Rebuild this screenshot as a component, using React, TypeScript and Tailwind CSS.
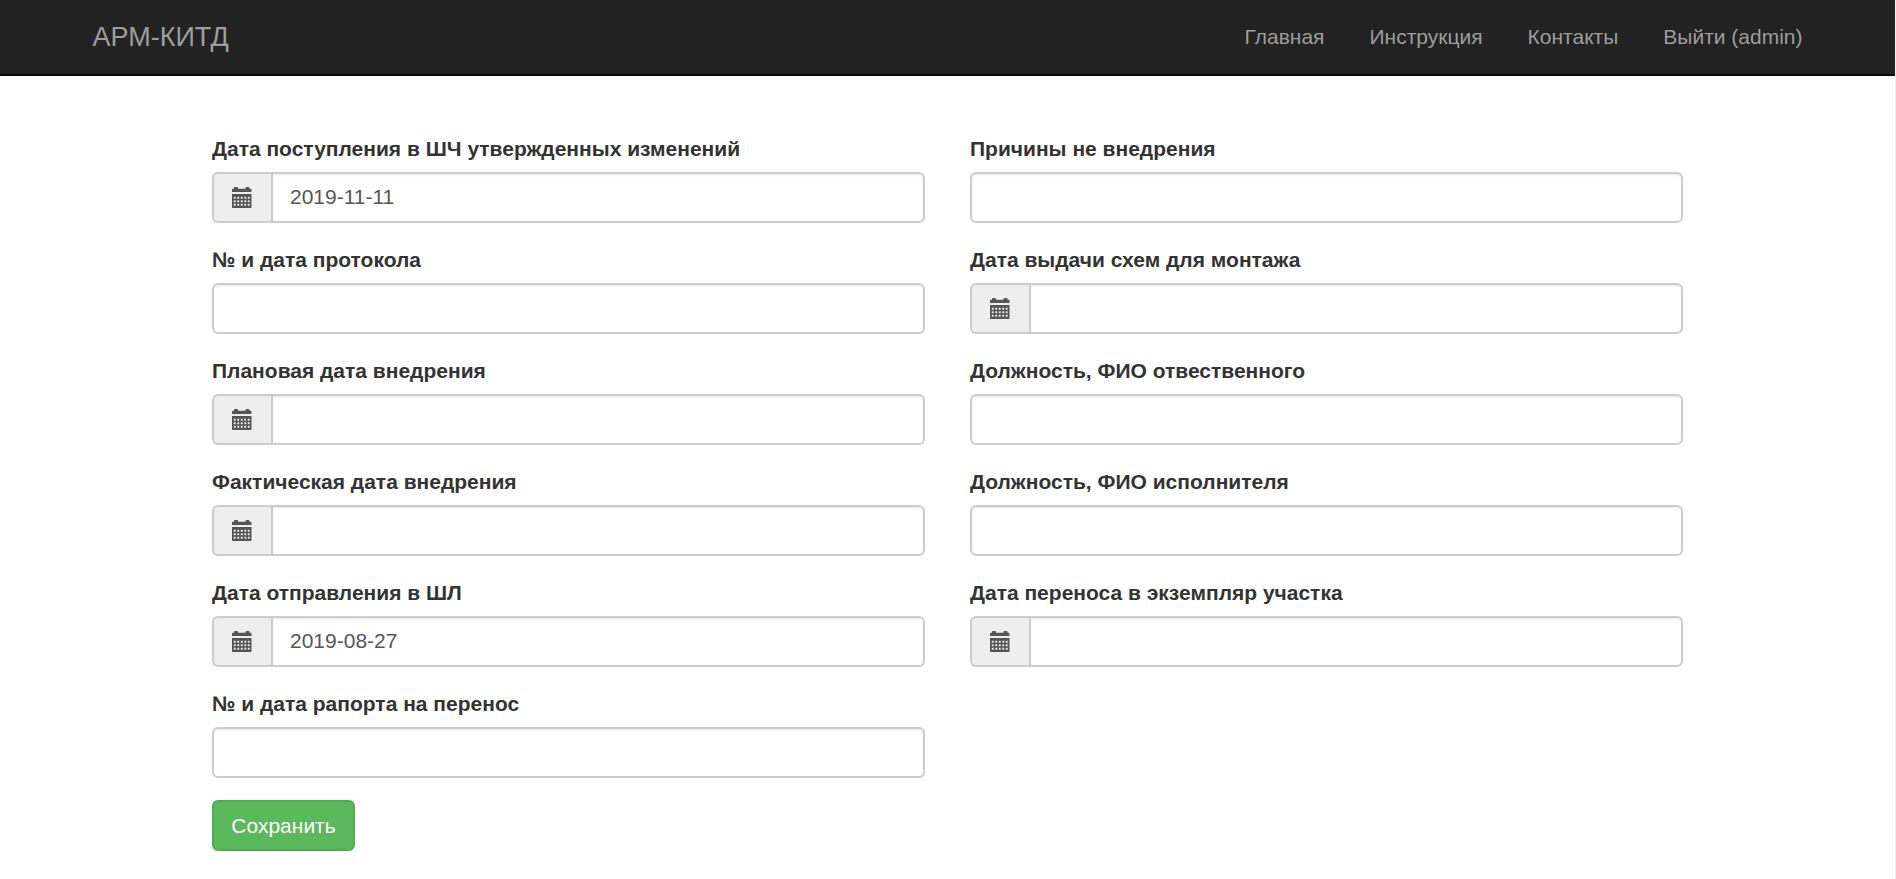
type FieldProps = { label: string; value?: string; date?: boolean };

const leftFields: FieldProps[] = [
  { label: "Дата поступления в ШЧ утвержденных изменений", value: "2019-11-11", date: true },
  { label: "№ и дата протокола" },
  { label: "Плановая дата внедрения", date: true },
  { label: "Фактическая дата внедрения", date: true },
  { label: "Дата отправления в ШЛ", value: "2019-08-27", date: true },
  { label: "№ и дата рапорта на перенос" },
];

const rightFields: FieldProps[] = [
  { label: "Причины не внедрения" },
  { label: "Дата выдачи схем для монтажа", date: true },
  { label: "Должность, ФИО отвественного" },
  { label: "Должность, ФИО исполнителя" },
  { label: "Дата переноса в экземпляр участка", date: true },
];

const navItems = ["Главная", "Инструкция", "Контакты", "Выйти (admin)"];

function CalendarIcon() {
  const columns = [1.8, 5.3, 8.8, 12.3, 15.8];
  const rows = [9.8, 13.3, 16.8];
  return (
    <svg width="20" height="21" viewBox="0 0 20 21" className="block" fill="#555555">
      <path d="M0 5V2.500q0-.7.7-.7H2V1q0-1 1-1h2q1 0 1 1v.8h7.500V1q0-1 1-1h2q1 0 1 1v.8h1.300q.7 0 .7.7V5z" />
      <path d="M0 7h19.500v13.300q0 .7-.7.7H.7q-.7 0-.7-.7z" />
      {rows.map((y) =>
        columns.map((x) => <rect key={`${x}-${y}`} x={x} y={y} width="1.900" height="1.900" fill="#eeeeee" />),
      )}
    </svg>
  );
}

function Field({ label, value = "", date = false }: FieldProps) {
  return (
    <div className="mb-[22px] flex flex-col">
      <label className="mb-2 h-[30px] text-[21px] leading-[30px] font-bold whitespace-nowrap text-[#333333]">{label}</label>
      <div className="flex h-[51px]">
        {date && (
          <span className="flex w-[59px] shrink-0 items-center rounded-l-md border-2 border-r-0 border-[#cccccc] bg-[#eeeeee] pl-[18px]">
            <CalendarIcon />
          </span>
        )}
        <input
          type="text"
          aria-label={label}
          defaultValue={value}
          className={
            "min-w-0 flex-1 border-2 border-[#cccccc] bg-white px-[17px] pb-[2px] text-[21px] text-[#555555] shadow-[inset_0_1.5px_1.5px_rgba(0,0,0,0.075)] outline-none " +
            (date ? "rounded-r-md" : "rounded-md")
          }
        />
      </div>
    </div>
  );
}

export default function App() {
  return (
    <div className="h-[879px] overflow-hidden border-r border-[#f0f0f0] bg-white font-['Liberation_Sans',Arial,sans-serif]">
      <header className="flex h-[76px] items-center justify-between border-b-2 border-[#080808] bg-[#222222] pr-[92.5px] pl-[92.5px] text-[#9d9d9d]">
        <a className="text-[27px] leading-[30px]">АРМ-КИТД</a>
        <nav className="flex gap-[45px] text-[21px] leading-[30px]">
          {navItems.map((item) => (
            <a key={item}>{item}</a>
          ))}
        </nav>
      </header>
      <main className="pt-[58px] pl-[212px]">
        <form className="grid grid-cols-[713px_713px] gap-x-[45px]">
          <div>
            {leftFields.map((field) => (
              <Field key={field.label} {...field} />
            ))}
            <button
              type="button"
              className="h-[51px] w-[143px] rounded-md border-2 border-[#4cae4c] bg-[#5cb85c] text-[21px] text-white"
            >
              Сохранить
            </button>
          </div>
          <div>
            {rightFields.map((field) => (
              <Field key={field.label} {...field} />
            ))}
          </div>
        </form>
      </main>
    </div>
  );
}
